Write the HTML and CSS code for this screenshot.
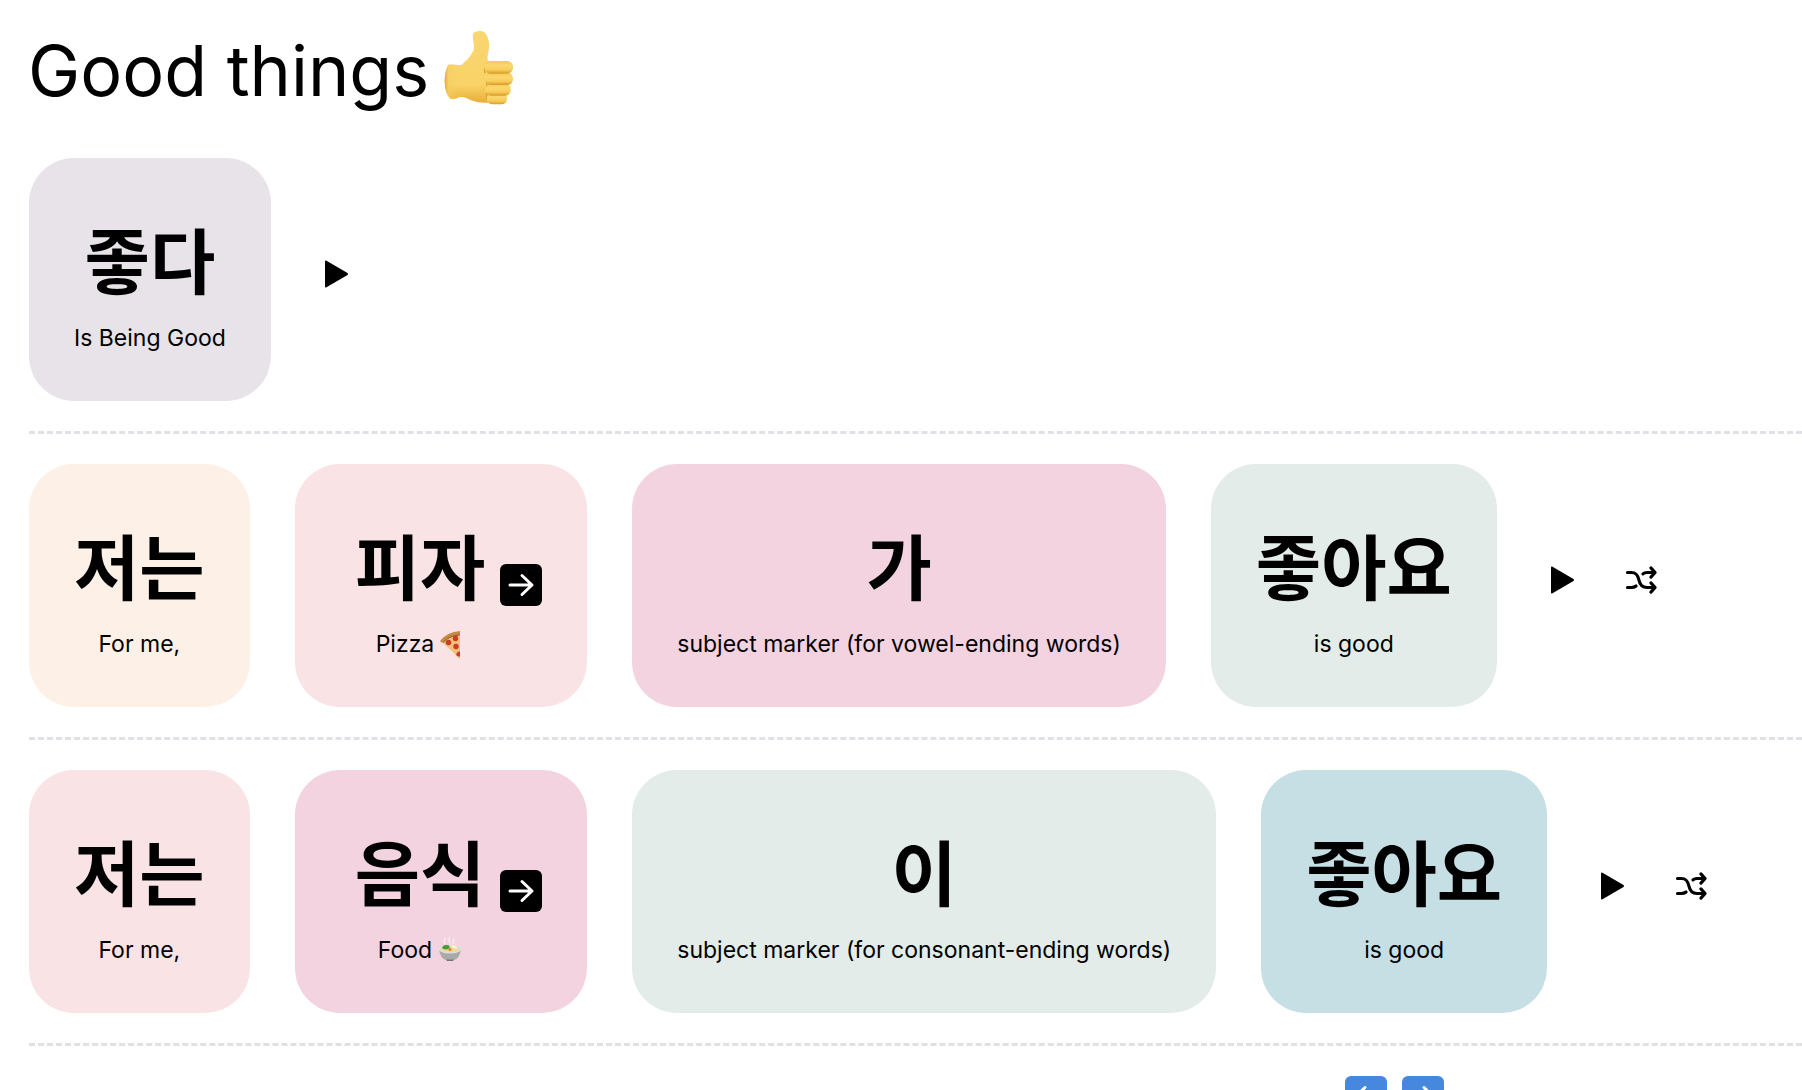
FILE: index.html
```html
<!DOCTYPE html>
<html lang="en">
<head>
<meta charset="utf-8">
<meta name="viewport" content="width=device-width, initial-scale=1">
<title>Good things</title>
<link rel="stylesheet" href="styles.css">
</head>
<body>
<svg width="0" height="0" class="sprite" aria-hidden="true">
  <symbol id="play" viewBox="0 0 24 24"><path d="M6 3.6Q6 2.6 7 3.1L21 11.4Q21.8 12 21 12.6L7 20.9Q6 21.4 6 20.4Z" fill="currentColor"/></symbol>
  <symbol id="shuffle" viewBox="0 0 24 24"><path d="M3 7H5.500C8.800 7 9.900 8.600 10.600 12S13 17 16 17H21M3 17H5.500Q7.500 17 8.700 16M13.300 7.900Q14.300 7 16 7H21M18.600 3.900L21.400 7L18.600 10.100M18.600 13.900L21.400 17L18.600 20.100" fill="none" stroke="currentColor" stroke-width="2.100" stroke-linecap="round" stroke-linejoin="round"/></symbol>
  <symbol id="arrow-right" viewBox="0 0 42 42"><path d="M10 21H32M22 11.500L32 21L22 30.500" fill="none" stroke="currentColor" stroke-width="3" stroke-linecap="round" stroke-linejoin="round"/></symbol>
  <symbol id="arrow-left" viewBox="0 0 42 42"><path d="M32 21H10M20 11.500L10 21L20 30.500" fill="none" stroke="currentColor" stroke-width="3" stroke-linecap="round" stroke-linejoin="round"/></symbol>
</svg>
<main class="page">
  <h1 class="title">Good things
    <svg class="thumb" viewBox="50 30 215 228" role="img" aria-label="thumbs up">
      <defs>
        <linearGradient id="hand" x1="0" y1="0" x2="0" y2="1"><stop offset="0" stop-color="#fad672"/><stop offset=".75" stop-color="#f9d367"/><stop offset="1" stop-color="#e9ae37"/></linearGradient>
        <linearGradient id="finger" x1="0" y1="0" x2="0" y2="1"><stop offset="0" stop-color="#f6c851"/><stop offset=".35" stop-color="#fbd770"/><stop offset=".7" stop-color="#f7cd58"/><stop offset="1" stop-color="#d89a2b"/></linearGradient>
        <linearGradient id="wrist" x1="0" y1="0" x2="1" y2="0"><stop offset="0" stop-color="#e2a834"/><stop offset=".3" stop-color="#f6ce63" stop-opacity=".6"/><stop offset="1" stop-color="#f6ce63" stop-opacity="0"/></linearGradient>
      </defs>
      <path d="M66 134C82 131 94 137 106 134C120 122 137 104 142 88C145 74 136 54 140 41C145 31 168 30 175 38C184 48 188 62 188 79C188 94 181 105 184 122L205 135L204 246C176 252 142 246 124 236C114 231 108 230 99 231C89 236 82 238 72 236C50 216 50 158 66 134Z" fill="url(#hand)"/>
      <path d="M66 134C76 132 86 134 95 136V232C86 237 80 238 72 236C50 216 50 158 66 134Z" fill="url(#wrist)"/>
      <path d="M175 160C172 145 175 132 187 127M181 165V240" fill="none" stroke="#d99c30" stroke-width="4"/>
      <rect x="181" y="218" width="61" height="35" rx="17" fill="url(#finger)"/>
      <rect x="177" y="191" width="76" height="36" rx="17" fill="url(#finger)"/>
      <rect x="175" y="158" width="85" height="37" rx="18" fill="url(#finger)"/>
      <rect x="173" y="123" width="87" height="38" rx="19" fill="url(#finger)"/>
    </svg>
  </h1>

  <section class="row">
    <div class="card lilac"><div class="word"><p class="ko" lang="ko">좋다</p><p class="en">Is Being Good</p></div></div>
    <div class="controls"><button class="icon" aria-label="Play"><svg><use href="#play"/></svg></button></div>
  </section>

  <section class="row">
    <div class="card cream"><div class="word"><p class="ko" lang="ko">저는</p><p class="en">For me,</p></div></div>
    <div class="card blush">
      <div class="word inset"><p class="ko" lang="ko">피자</p><p class="en">Pizza
        <svg class="emoji" viewBox="0 0 24 28" role="img" aria-label="pizza">
          <path d="M1 10Q10 2 20 2V27.500Q18 27.500 16 24Z" fill="#f0c27a"/>
          <path d="M0 10Q7 1 20 0V3.800Q9 4.500 3 11.500Q1 12 0 10Z" fill="#c5883f"/>
          <path d="M3 11.500Q9 4.800 20 3.900" fill="none" stroke="#8c5526" stroke-width="1"/>
          <g fill="#cf3a24"><circle cx="15.500" cy="7.500" r="2.700"/><circle cx="8.500" cy="11.500" r="2.800"/><circle cx="16" cy="15.500" r="2.700"/><path d="M20 20.500V25.500Q16 26 16.300 22.800Q17.500 20.200 20 20.500Z"/></g>
        </svg></p></div>
      <button class="swap" aria-label="Next word"><svg><use href="#arrow-right"/></svg></button>
    </div>
    <div class="card rose"><div class="word"><p class="ko" lang="ko">가</p><p class="en">subject marker (for vowel-ending words)</p></div></div>
    <div class="card sage"><div class="word"><p class="ko" lang="ko">좋아요</p><p class="en">is good</p></div></div>
    <div class="controls"><button class="icon" aria-label="Play"><svg><use href="#play"/></svg></button><button class="icon" aria-label="Shuffle"><svg><use href="#shuffle"/></svg></button></div>
  </section>

  <section class="row">
    <div class="card blush"><div class="word"><p class="ko" lang="ko">저는</p><p class="en">For me,</p></div></div>
    <div class="card rose">
      <div class="word inset"><p class="ko" lang="ko">음식</p><p class="en">Food
        <svg class="emoji" viewBox="0 0 24 28" role="img" aria-label="bowl of food">
          <path d="M7 7Q5 4 7.500 1M12 6Q10 4 12 0M16 7Q14 4 16.500 1.500" fill="none" stroke="#fff" stroke-opacity=".6" stroke-width="1.200"/>
          <path d="M1 12Q2 22 9 23.500H15Q22 22 23 12Z" fill="#a9aaa8"/>
          <path d="M8 22.500H16L15 24H9Z" fill="#75777a"/>
          <ellipse cx="12" cy="12" rx="11.500" ry="4.500" fill="#dededc"/>
          <ellipse cx="12" cy="12" rx="9.500" ry="3.300" fill="#efd7a0"/>
          <path d="M4 11Q5 7.500 9 8Q12 8 11.500 11Q8 14 4 11Z" fill="#4a9a36"/>
          <path d="M13 8L17 8.500L20 12L15 11Z" fill="#fff3d6"/><circle cx="12" cy="12.500" r="1.500" fill="#db7d2c"/>
        </svg></p></div>
      <button class="swap" aria-label="Next word"><svg><use href="#arrow-right"/></svg></button>
    </div>
    <div class="card sage"><div class="word"><p class="ko" lang="ko">이</p><p class="en">subject marker (for consonant-ending words)</p></div></div>
    <div class="card sky"><div class="word"><p class="ko" lang="ko">좋아요</p><p class="en">is good</p></div></div>
    <div class="controls"><button class="icon" aria-label="Play"><svg><use href="#play"/></svg></button><button class="icon" aria-label="Shuffle"><svg><use href="#shuffle"/></svg></button></div>
  </section>

  <nav class="pager" aria-label="Lesson">
    <button class="swap blue" aria-label="Previous"><svg><use href="#arrow-left"/></svg></button>
    <button class="swap blue" aria-label="Next"><svg><use href="#arrow-right"/></svg></button>
  </nav>
</main>
</body>
</html>
```
FILE: styles.css
```css
* { box-sizing: border-box; }

body {
  margin: 0;
  background: #fff;
  color: #000;
  font-family: Inter, "Noto Sans CJK KR", sans-serif;
  overflow-x: hidden;
}

h1, p { margin: 0; }

.sprite { position: absolute; }

button {
  display: block;
  margin: 0;
  padding: 0;
  border: 0;
  background: none;
  color: inherit;
  cursor: pointer;
}

button svg {
  display: block;
  width: 100%;
  height: 100%;
}

.page { padding: 26px 0 0 28px; }

.title {
  display: flex;
  align-items: center;
  gap: 14px;
  margin-bottom: 42px;
  font-size: 70px;
  font-weight: 400;
  line-height: 90px;
}

.thumb {
  width: 72px;
  height: 76px;
  margin-bottom: 6px;
}

.row {
  display: flex;
  align-items: center;
  gap: 45px;
  padding-bottom: 30px;
  margin: 0 0 30px 1px;
  border-bottom: 3px dashed #dfe1e6;
}

.card {
  display: flex;
  flex: none;
  padding: 49px 45px 40px;
  border-radius: 45px;
}

.lilac { background: #e8e3e9; }
.cream { background: #fdf0e6; }
.blush { background: #f9e3e4; }
.rose { background: #f4d3e0; }
.sage { background: #e3ece8; }
.sky { background: #c5dfe4; }

.word {
  display: flex;
  flex-direction: column;
  align-items: center;
  gap: 9px;
}

.inset { padding: 0 15px; }

.ko {
  font-family: "Noto Sans CJK KR", sans-serif;
  font-size: 71px;
  font-weight: 700;
  line-height: 100px;
}

.en {
  display: flex;
  align-items: center;
  gap: 6px;
  font-size: 23px;
  line-height: 45px;
  white-space: nowrap;
}

.emoji {
  width: 24px;
  height: 28px;
}

.swap {
  flex: none;
  width: 42px;
  height: 42px;
  margin-top: 51px;
  border-radius: 6px;
  background: #000;
  color: #fff;
}

.controls {
  display: flex;
  gap: 45px;
  margin-bottom: 12px;
}

.icon {
  width: 36px;
  height: 36px;
}

.pager {
  display: flex;
  justify-content: flex-end;
  gap: 15px;
  padding-right: 20.2%;
}

.pager .swap { margin-top: 0; }

.blue { background: #4688dd; }
```
